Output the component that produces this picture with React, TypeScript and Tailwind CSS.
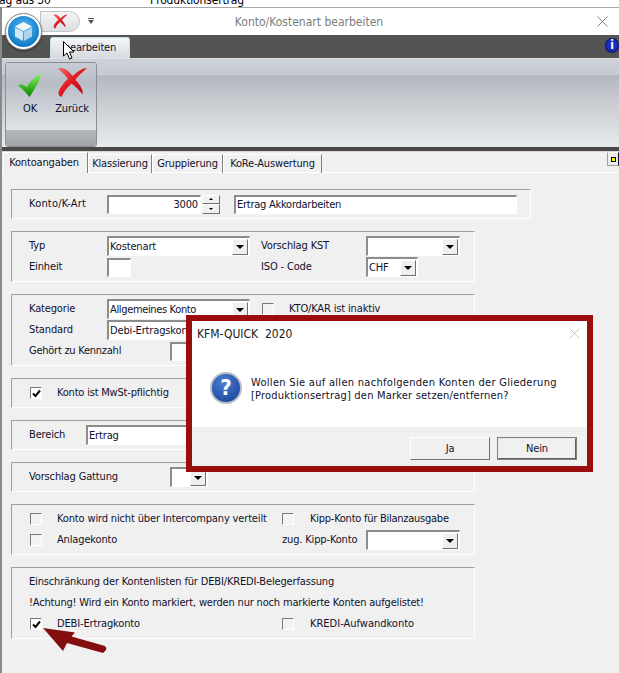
import React from 'react';

const field = 'border-t-2 border-l-2 border-t-[#8c8c8c] border-l-[#8c8c8c] border-r border-b border-r-white border-b-white bg-white';

function Section({ h, w, children }: { h: string; w: string; children: React.ReactNode }) {
  return (
    <div className={`${h} ${w} border border-t-[#a0a0a0] border-l-[#a0a0a0] border-r-white border-b-white pl-[17px] flex flex-col justify-center`}>
      {children}
    </div>
  );
}

function Arrow() {
  return (
    <span className="w-[16px] h-[16px] ml-auto shrink-0 bg-[#efefef] border border-t-white border-l-white border-r-[#707070] border-b-[#707070] flex items-center justify-center">
      <span className="w-0 h-0 border-x-[4px] border-x-transparent border-t-[4px] border-t-black" />
    </span>
  );
}

function Combo({ w, text, tight }: { w: string; text?: string; tight?: boolean }) {
  return (
    <div className={`${w} h-[20px] ${field} flex items-center pl-[1px] pr-[1px] overflow-hidden whitespace-nowrap`}>
      <span className={tight ? 'tracking-[-0.35px]' : ''}>{text}</span>
      <Arrow />
    </div>
  );
}

function Check({ on }: { on?: boolean }) {
  return (
    <span className={`w-[12px] h-[12px] shrink-0 border-t border-l border-t-[#7a7a7a] border-l-[#7a7a7a] border-r border-b border-r-white border-b-white flex items-center justify-center ${on ? 'bg-white' : 'bg-[#f3f3f3]'}`}>
      {on && (
        <svg width="9" height="9" viewBox="0 0 9 9">
          <path d="M1 4.5 L3.5 7 L8 1.5" fill="none" stroke="#000" strokeWidth="2" />
        </svg>
      )}
    </span>
  );
}

function Tab({ label, w, active }: { label: string; w: string; active?: boolean }) {
  return (
    <div className={`${w} border-t border-l border-r border-t-white border-l-white border-r-[#808080] flex items-center justify-center ${active ? 'h-[21px] mt-0 relative z-10 bg-[#f0f0f0] pr-[3px]' : 'h-[19px] mt-[2px]'}`}>
      {label}
    </div>
  );
}

function Orb() {
  return (
    <div className="absolute left-[5px] top-[13px] w-[37px] h-[37px] rounded-full bg-white border border-[#8a8a8a] shadow-[0_1px_2px_rgba(0,0,0,0.5)] flex items-center justify-center z-20">
      <svg width="31" height="31" viewBox="0 0 31 31">
        <defs>
          <radialGradient id="orb" cx="50%" cy="40%" r="60%">
            <stop offset="0%" stopColor="#5cc0f2" />
            <stop offset="100%" stopColor="#0d74c4" />
          </radialGradient>
        </defs>
        <circle cx="15.5" cy="15.5" r="15.5" fill="url(#orb)" />
        <path d="M15.5 6 L24 10.5 L15.5 15 L7 10.5 Z" fill="#f2f8fc" />
        <path d="M7 11.5 L15 15.8 L15 25 L7 20.5 Z" fill="#cfe6f5" />
        <path d="M24 11.5 L16 15.8 L16 25 L24 20.5 Z" fill="#a9d3ee" />
      </svg>
    </div>
  );
}

function RedX({ w, h }: { w: number; h: number }) {
  return (
    <svg width={w} height={h} viewBox="0 0 34 34" preserveAspectRatio="none">
      <defs>
        <linearGradient id="rx" x1="0" y1="0" x2="1" y2="1">
          <stop offset="0%" stopColor="#f36a6a" />
          <stop offset="50%" stopColor="#e0141c" />
          <stop offset="100%" stopColor="#a80c12" />
        </linearGradient>
      </defs>
      <path d="M1 2 C7 -1 13 4 17 10 C21 6 27 1 33 1 C28 5 23 10 20 14 C25 19 29 25 28 30 C24 25 20 21 16 18 C10 23 7 28 5 33 C0 31 1 26 5 21 C7 18 10 15 12 13 C9 9 5 5 1 2 Z" fill="url(#rx)" />
    </svg>
  );
}

function GreenCheck() {
  return (
    <svg width="26" height="26" viewBox="0 0 27 27">
      <defs>
        <linearGradient id="gc" x1="0" y1="0" x2="0" y2="1">
          <stop offset="0%" stopColor="#9df07a" />
          <stop offset="60%" stopColor="#2fb81e" />
          <stop offset="100%" stopColor="#0f7a10" />
        </linearGradient>
      </defs>
      <path d="M1 14 C4 12 7 12 10 16 C13 10 19 4 26 1 C24 9 18 18 13 26 C9 21 5 17 1 14 Z" fill="url(#gc)" />
    </svg>
  );
}

export default function App() {
  return (
    <div className="relative w-[619px] h-[673px] overflow-hidden bg-[#f0f0f0] text-[11px] leading-[14px] tracking-[-0.15px] text-[#10102c] font-['DejaVu_Sans',sans-serif] [font-stretch:condensed]">
      {/* window behind */}
      <div className="h-[7px] bg-white overflow-hidden flex text-[12px] leading-[12px] text-black">
        <span className="ml-[-1px] mt-[-6px] w-[151px]">ag aus 30</span>
        <span className="mt-[-6px]">Produktionsertrag</span>
      </div>

      <div className="h-[666px] border-l-2 border-l-[#8a8a8a]">
        {/* title bar */}
        <div className="h-[28px] bg-white border-t border-t-[#a8a8a8] relative flex items-center justify-center text-[12px] tracking-[0px] text-[#7c7c7c] pr-[3px]">
          Konto/Kostenart bearbeiten
          <svg className="absolute right-[11px] top-[8px]" width="11" height="11" viewBox="0 0 11 11">
            <path d="M0.5 0.5 L10.5 10.5 M10.5 0.5 L0.5 10.5" stroke="#808080" strokeWidth="1" />
          </svg>
        </div>

        {/* tab strip */}
        <div className="h-[23px] bg-[#545454] relative flex items-end pl-[48px]">
          <div className="w-[80px] h-[21px] rounded-t-[3px] bg-gradient-to-b from-[#f4f6f8] to-[#d6dadf] border-t border-x border-[#c8e0e8] flex items-center justify-center text-[11px]">
            bearbeiten
          </div>
          <span className="absolute right-0 top-[3px] w-[14px] h-[15px] rounded-full bg-[#1d2fc4] flex justify-center text-white font-bold text-[12px] leading-[15px] shadow-[inset_0_0_3px_#000]">i</span>
        </div>

        {/* ribbon */}
        <div className="h-[89px] pl-[3px] pt-[3px] border-t border-t-[#e0e0e0] bg-[linear-gradient(#cdd1d9_0%,#c6cad2_18%,#b3b7c1_19%,#c9ccd1_50%,#e6ecee_100%)]">
          <div className="w-[92px] h-[85px] rounded-[3px] border border-[#8a8d92] flex flex-col overflow-hidden">
            <div className="flex-1 flex pl-[10px] pt-[4px] gap-[10px] bg-[linear-gradient(#c8ccd4,#b8bcc5_30%,#dfe5e8)]">
              <div className="flex flex-col items-center w-[28px]">
                <div className="h-[31px] flex items-end"><GreenCheck /></div>
                <span className="mt-[4px]">OK</span>
              </div>
              <div className="flex flex-col items-center w-[36px]">
                <div className="h-[31px]"><RedX w={31} h={31} /></div>
                <span className="mt-[4px]">Zurück</span>
              </div>
            </div>
            <div className="h-[16px] bg-gradient-to-b from-[#b5b8bc] to-[#a0a3a7]" />
          </div>
        </div>
        <div className="h-[5px] bg-[#4a4a4a] border-b border-b-[#d8d8d8]" />

        {/* tabs */}
        <div className="h-[21px] flex relative pl-[1px] border-b border-b-white">
          <Tab label="Kontoangaben" w="w-[85px]" active />
          <Tab label="Klassierung" w="w-[64px]" />
          <Tab label="Gruppierung" w="w-[71px]" />
          <Tab label="KoRe-Auswertung" w="w-[99px]" />
          <span className="absolute right-0 top-0 w-[12px] h-[14px] bg-[#ececec] border border-t-white border-l-[#a0a0a0] border-b-[#a0a0a0] flex items-center justify-center">
            <span className="w-[5px] h-[5px] bg-[#f5f500] border border-black" />
          </span>
        </div>

        {/* form */}
        <div className="pl-[9px] pt-[16px] flex flex-col gap-[12px]">
          <Section h="h-[30px]" w="w-[520px]">
            <div className="flex items-center">
              <span className="w-[78px] tracking-[0.2px]">Konto/K-Art</span>
              <div className={`w-[94px] h-[19px] ${field} flex items-center justify-end pr-[2px]`}>3000</div>
              <div className="w-[18px] h-[19px] ml-[1px] flex flex-col">
                <span className="h-[9px] bg-[#f0f0f0] border border-t-white border-l-white border-r-[#707070] border-b-[#707070] flex items-center justify-center"><span className="w-0 h-0 border-x-[2px] border-x-transparent border-b-[2px] border-b-black" /></span>
                <span className="h-[10px] bg-[#f0f0f0] border border-t-white border-l-white border-r-[#707070] border-b-[#707070] flex items-center justify-center"><span className="w-0 h-0 border-x-[2px] border-x-transparent border-t-[2px] border-t-black" /></span>
              </div>
              <div className={`w-[283px] h-[19px] ml-[14px] ${field} flex items-center pl-[1px] tracking-[-0.25px]`}>Ertrag Akkordarbeiten</div>
            </div>
          </Section>

          <Section h="h-[51px]" w="w-[464px]">
            <div className="flex items-center h-[21px]">
              <span className="w-[78px]">Typ</span>
              <Combo w="w-[143px]" text="Kostenart" />
              <span className="w-[105px] ml-[11px]">Vorschlag KST</span>
              <Combo w="w-[94px]" />
            </div>
            <div className="flex items-center h-[21px]">
              <span className="w-[78px]">Einheit</span>
              <div className={`w-[24px] h-[19px] ${field}`} />
              <span className="w-[105px] ml-[130px]">ISO - Code</span>
              <Combo w="w-[52px]" text="CHF" />
            </div>
          </Section>

          <Section h="h-[72px]" w="w-[464px]">
            <div className="flex items-center h-[21px]">
              <span className="w-[78px]">Kategorie</span>
              <Combo w="w-[143px]" text="Allgemeines Konto" tight />
              <span className="ml-[12px]"><Check /></span>
              <span className="ml-[15px]">KTO/KAR ist inaktiv</span>
            </div>
            <div className="flex items-center h-[21px]">
              <span className="w-[78px]">Standard</span>
              <Combo w="w-[143px]" text="Debi-Ertragskonto" />
            </div>
            <div className="flex items-center h-[21px]">
              <span className="w-[141px] tracking-[-0.25px]">Gehört zu Kennzahl</span>
              <div className={`w-[60px] h-[19px] ${field}`} />
            </div>
          </Section>

          <Section h="h-[30px]" w="w-[464px]">
            <div className="flex items-center pl-[1px]">
              <Check on />
              <span className="ml-[15px] tracking-[-0.2px]">Konto ist MwSt-pflichtig</span>
            </div>
          </Section>

          <Section h="h-[30px]" w="w-[464px]">
            <div className="flex items-center">
              <span className="w-[57px]">Bereich</span>
              <div className={`w-[200px] h-[20px] ${field} flex items-center pl-[1px]`}>Ertrag</div>
            </div>
          </Section>

          <Section h="h-[30px]" w="w-[464px]">
            <div className="flex items-center">
              <span className="w-[141px]">Vorschlag Gattung</span>
              <Combo w="w-[38px]" />
            </div>
          </Section>

          <Section h="h-[51px]" w="w-[464px]">
            <div className="flex items-center h-[21px] pl-[1px]">
              <Check />
              <span className="w-[225px] ml-[15px] whitespace-nowrap">Konto wird nicht über Intercompany verteilt</span>
              <Check />
              <span className="ml-[16px] whitespace-nowrap tracking-[-0.25px]">Kipp-Konto für Bilanzausgabe</span>
            </div>
            <div className="flex items-center h-[21px] pl-[1px]">
              <Check />
              <span className="w-[225px] ml-[15px]">Anlagekonto</span>
              <span className="w-[84px]">zug. Kipp-Konto</span>
              <Combo w="w-[94px]" />
            </div>
          </Section>

          <Section h="h-[72px]" w="w-[464px]">
            <div className="flex items-center h-[21px] whitespace-nowrap">Einschränkung der Kontenlisten für DEBI/KREDI-Belegerfassung</div>
            <div className="flex items-center h-[21px] whitespace-nowrap tracking-[-0.17px]">!Achtung! Wird ein Konto markiert, werden nur noch markierte Konten aufgelistet!</div>
            <div className="flex items-center h-[21px] pl-[1px]">
              <Check on />
              <span className="w-[225px] ml-[15px]">DEBI-Ertragkonto</span>
              <Check />
              <span className="ml-[16px] tracking-[0px]">KREDI-Aufwandkonto</span>
            </div>
          </Section>
        </div>
      </div>

      <Orb />

      {/* quick access */}
      <div className="absolute left-[40px] top-[11px] w-[40px] h-[21px] rounded-r-full border border-[#c0c4ca] bg-gradient-to-b from-[#f5f5f5] to-[#dcdfe3] flex items-center justify-center z-10">
        <RedX w={15} h={15} />
      </div>
      <div className="absolute left-[88px] top-[18px] flex flex-col items-center gap-[1px] z-10">
        <span className="w-[6px] h-[1px] bg-[#555]" />
        <span className="w-0 h-0 border-x-[3px] border-x-transparent border-t-[4px] border-t-[#555]" />
      </div>

      {/* mouse cursor */}
      <svg className="absolute left-[63px] top-[41px] z-20" width="12" height="19" viewBox="0 0 12 19">
        <path d="M0.5 0.5 L0.5 15 L4 12 L6.5 18 L9 17 L6.5 11 L11 11 Z" fill="#fff" stroke="#000" strokeWidth="1" />
      </svg>

      {/* dialog */}
      <div className="absolute left-[186px] top-[315px] w-[407px] h-[157px] border-[6px] border-[#9c0e0e] bg-white flex flex-col z-20">
        <div className="h-[106px] relative pl-[5px] pt-[6px] text-[12px] leading-[14px] tracking-[0px] text-[#1a1a1a]">
          KFM-QUICK&nbsp;&nbsp;2020
          <svg className="absolute right-[7px] top-[7px]" width="11" height="11" viewBox="0 0 11 11">
            <path d="M0.5 0.5 L10.5 10.5 M10.5 0.5 L0.5 10.5" stroke="#c4c4c4" strokeWidth="1" />
          </svg>
          <div className="absolute left-[18px] top-[51px] w-[32px] h-[32px] rounded-full border-2 border-[#b8bcc4] bg-[radial-gradient(circle_at_40%_30%,#4a7fd0,#123d94)] flex items-center justify-center text-white font-bold text-[22px] leading-none">?</div>
          <div className="absolute left-[59px] top-[55px] text-[11px] leading-[13px] text-[#101028] whitespace-nowrap">
            <span className="block tracking-[0.3px]">Wollen Sie auf allen nachfolgenden Konten der Gliederung</span>
            <span className="block tracking-[0.2px]">[Produktionsertrag] den Marker setzen/entfernen?</span>
          </div>
        </div>
        <div className="flex-1 bg-[#f0f0f0] flex justify-end items-start pt-[10px] pr-[10px] gap-[7px]">
          <div className="w-[80px] h-[23px] bg-[#f0f0f0] border border-t-white border-l-white border-r-[#707070] border-b-[#707070] flex items-center justify-center">Ja</div>
          <div className="w-[80px] h-[23px] bg-[#f0f0f0] border-2 border-t-[#e8e8e8] border-l-[#e8e8e8] border-r-[#606060] border-b-[#606060] outline outline-1 outline-[#808080] -outline-offset-1 flex items-center justify-center">Nein</div>
        </div>
      </div>

      {/* red arrow */}
      <svg className="absolute left-[40px] top-[625px] z-20" width="70" height="32" viewBox="0 0 70 32">
        <path d="M3 3 L35 7.5 L31.5 11.5 L65 21 Q67 23 66 25 L63 28 L27 18 L23 26 Z" fill="#840d10" />
      </svg>
    </div>
  );
}
